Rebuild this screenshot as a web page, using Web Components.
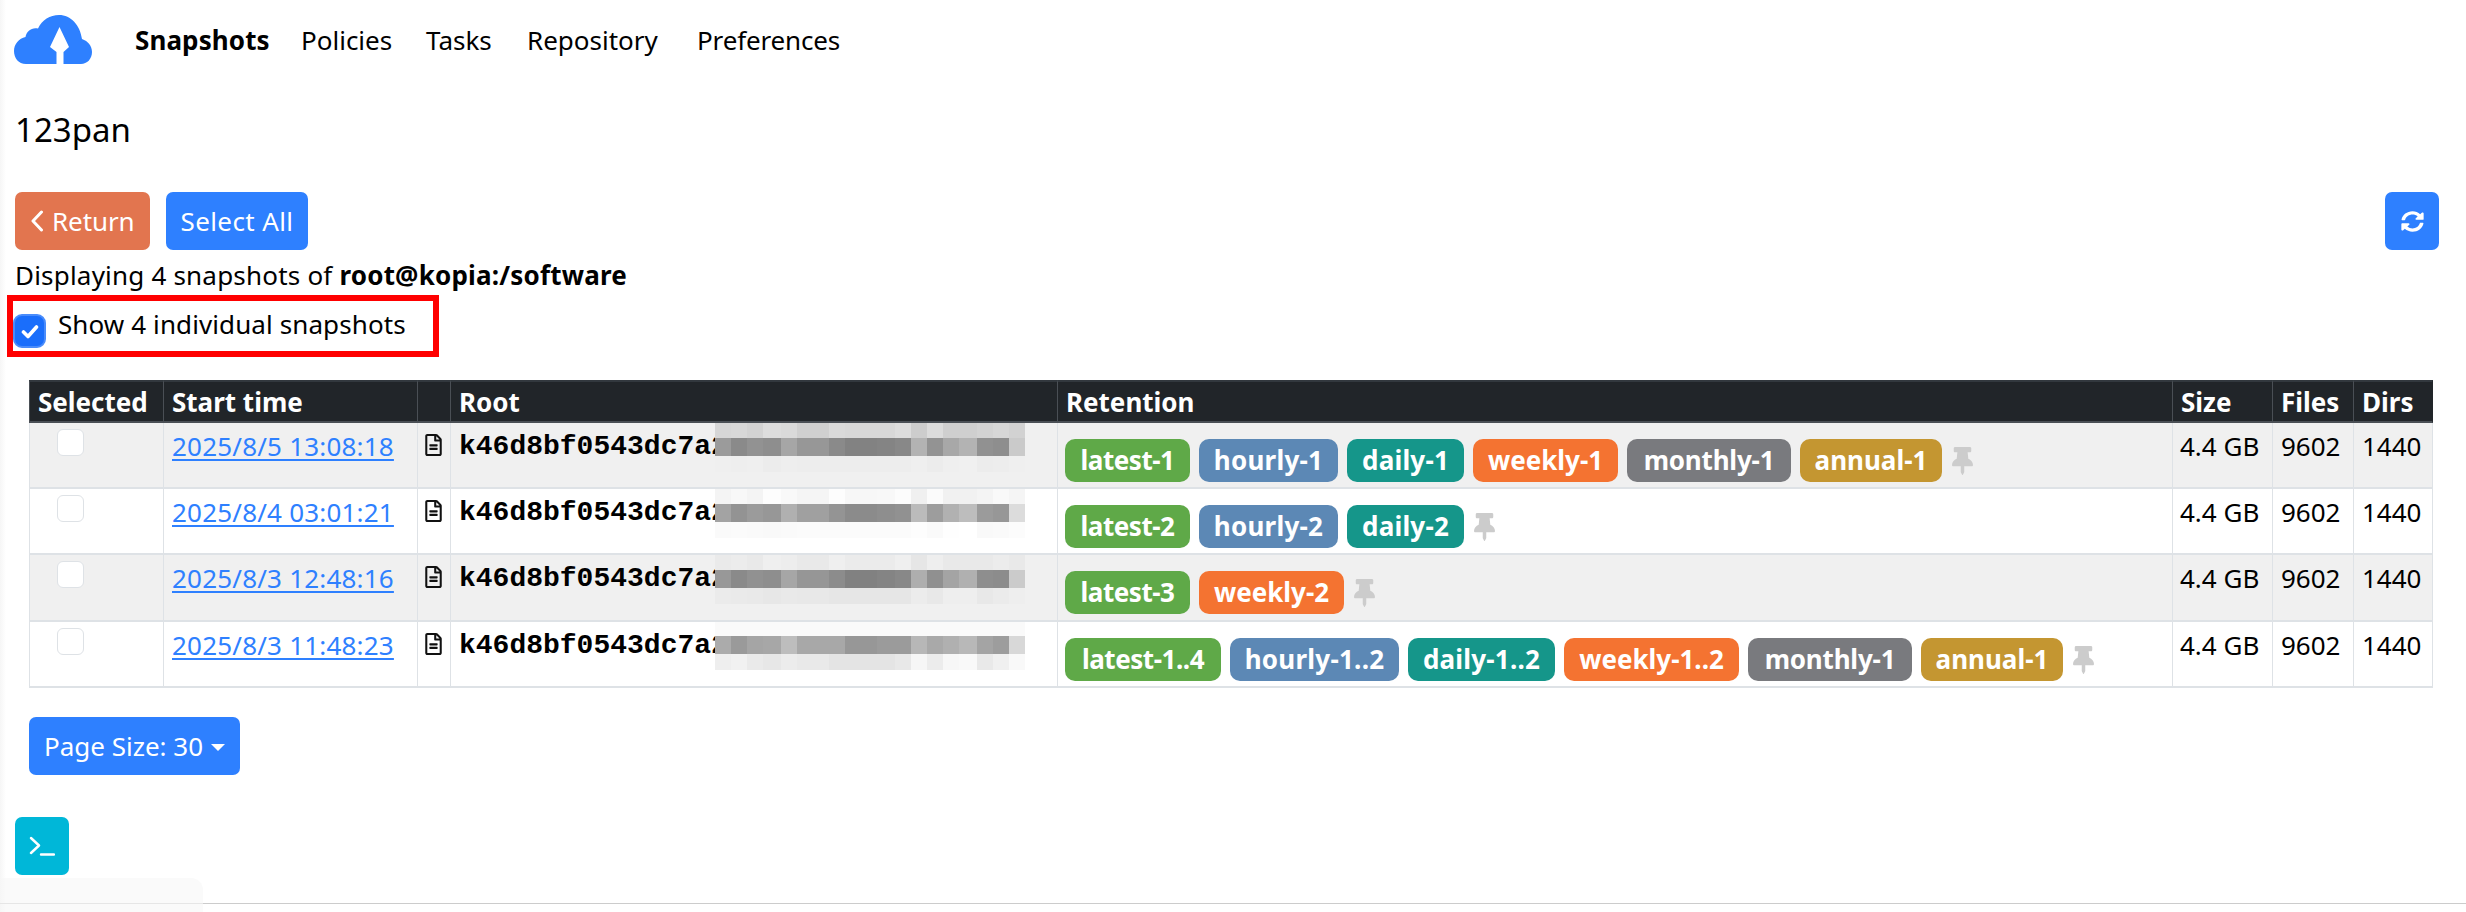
<!doctype html><html lang="en"><head><meta charset="utf-8"><title>Snapshots</title>
<style>
html,body{margin:0;padding:0;background:#fff;height:100%}
body{font-family:"Noto Sans",sans-serif;font-size:26px;color:#000;overflow:hidden}
</style></head><body>
<kopia-app></kopia-app>
<script>
const BASE=':host{font-family:"Noto Sans",sans-serif}';
function def(name,html){
  customElements.define(name,class extends HTMLElement{
    constructor(){super();this.attachShadow({mode:'open'}).innerHTML=typeof html==='function'?html(this):html;}
  });
}
const P={
 sync:'M370.72 133.28C339.458 104.008 298.888 87.962 255.848 88c-77.458.068-144.328 53.178-162.791 126.85-1.344 5.363-6.122 9.15-11.651 9.15H24.103c-7.498 0-13.194-6.807-11.807-14.176C33.933 94.924 134.813 8 256 8c66.448 0 126.791 26.136 171.315 68.685L463.03 40.97C478.149 25.851 504 36.559 504 57.941V192c0 13.255-10.745 24-24 24H345.941c-21.382 0-32.09-25.851-16.971-40.971l41.75-41.749zM32 296h134.059c21.382 0 32.09 25.851 16.971 40.971l-41.75 41.75c31.262 29.273 71.835 45.319 114.876 45.28 77.418-.07 144.315-53.144 162.787-126.849 1.344-5.363 6.122-9.15 11.651-9.15h57.304c7.498 0 13.193 6.807 11.807 14.176C478.067 417.076 377.187 504 256 504c-66.448 0-126.791-26.136-171.315-68.685L48.97 471.03C33.851 486.149 8 475.441 8 454.059V320c0-13.255 10.745-24 24-24z',
 pin:'M298.028 214.267L285.793 96H328c13.255 0 24-10.745 24-24V24c0-13.255-10.745-24-24-24H56C42.745 0 32 10.745 32 24v48c0 13.255 10.745 24 24 24h42.207L85.972 214.267C37.465 236.82 0 277.261 0 328c0 13.255 10.745 24 24 24h136v104.007c0 1.242.289 2.467.845 3.578l24 48c2.941 5.882 11.364 5.893 14.311 0l24-48a8.008 8.008 0 0 0 .845-3.578V352h136c13.255 0 24-10.745 24-24-.001-51.183-37.983-91.42-85.973-113.733z',
 file:'M288 248v28c0 6.6-5.4 12-12 12H108c-6.6 0-12-5.4-12-12v-28c0-6.6 5.4-12 12-12h168c6.6 0 12 5.4 12 12zm-12 72H108c-6.6 0-12 5.4-12 12v28c0 6.6 5.4 12 12 12h168c6.6 0 12-5.4 12-12v-28c0-6.6-5.4-12-12-12zm108-188.1V464c0 26.5-21.5 48-48 48H48c-26.5 0-48-21.5-48-48V48C0 21.5 21.5 0 48 0h204.1C264.8 0 277 5.1 286 14.1L369.9 98c9 8.9 14.1 21.2 14.1 33.9zm-128-80V128h76.1L256 51.9zM336 464V176H232c-13.3 0-24-10.7-24-24V48H48v416h288z'
};

def('k-btn',`<style>${BASE}
:host{display:inline-flex;align-items:center;justify-content:center;box-sizing:border-box;height:58px;padding:0 var(--pad,16px);border-radius:7px;background:var(--bg,#2e80ff);color:#fff;font-size:26px;line-height:36px;white-space:nowrap;gap:var(--gap,0);letter-spacing:var(--ls,0)}
</style><slot></slot>`);

def('k-logo',`<style>:host{display:block;width:78px;height:49px}svg{display:block}</style>
<svg width="78" height="49" viewBox="13 15 78 49"><path fill="#2e80ff" d="M25 64C17.500 64 13 58 13 51C13 44 18 38.500 24.500 37C25.500 31 31 27 37 28.500C41 20 49 15 58 15C70 15 79 25 81 39C87 41 91 46 91 52C91 59 86 64 80 64Z"/><path fill="#fff" d="M58.500 27L68 47L62.500 52L62.500 64L55.500 64L55.500 52L49 47Z"/></svg>`);
def('k-nav-link',`<style>:host{display:block;color:#000;line-height:36px;white-space:nowrap;letter-spacing:var(--ls,0)}:host([active]){font-weight:700;letter-spacing:.1px}</style><slot></slot>`);
def('k-nav',`<style>${BASE}
:host{display:flex;align-items:center;height:49px;padding:15px 0 0 14px}
nav{display:grid;grid-template-columns:166px 125px 101px 170px auto;margin-left:43px;margin-top:1px}
</style><k-logo></k-logo><nav><slot></slot></nav>`);

def('k-badge',`<style>${BASE}
:host{display:inline-block;box-sizing:border-box;height:43px;width:var(--w);text-align:center;border-radius:10px;color:#fff;font-weight:700;font-size:26px;line-height:43px;white-space:nowrap;background:var(--c);letter-spacing:var(--ls,0)}
</style><slot></slot>`);
def('k-pin',`<style>:host{display:block;width:21px;height:28px}svg{display:block}</style><svg width="21" height="28" viewBox="0 0 384 512"><path fill="#ccc" d="${P.pin}"/></svg>`);
def('k-file',`<style>:host{display:block;width:17px;height:22px}svg{display:block}</style><svg width="17" height="22" viewBox="0 0 384 512"><path fill="#111" d="${P.file}"/></svg>`);
def('k-check',`<style>:host{display:block;box-sizing:border-box;width:27px;height:27px;background:#fff;border:1px solid #dee2e6;border-radius:6px}</style>`);

const W=[16,16,16,18,16,16,16,16,16,16,18,16,16,16,16,18,16,16,16];
const MASK=[
 ['d6 d8 d3 dd da d0 d0 da d8 d8 d8 dd cd dc cf cf d3 d7 d2','9b 8a 92 8e a6 97 97 8a 82 82 84 88 b3 93 a8 b3 91 8e ca','ef ee ef ec ee ed ed ed ed ed ed ed ef ec ef f0 ec ed ef'],
 ['f4 f8 f4 fd f9 f5 f5 fd f7 f7 f8 fc f0 fb f1 f1 f4 f9 f5','a3 93 9b 97 b0 a0 a0 94 8b 8b 8e 91 bb 9d b1 bd 9b 97 dc','fa fb fa f9 fa fb fb fb fb fb fb fb fd fa fe ff f9 fa fc'],
 ['ea ec e9 ef ed e9 e9 ef eb eb eb ef e6 ee e9 e9 e9 ec e9','98 8a 91 8e a6 96 96 8c 81 81 84 88 ae 90 a4 b0 8e 8c cb','eb ea e9 e7 e9 e8 e8 e6 e6 e6 e6 e6 ec e8 ee ee e8 eb ee'],
 ['fa fa fa fa fa fa fa fa fa fa fa fa fa fa fa fa fa fa fa','ab 9a a5 a7 bd a8 a8 a8 97 97 9b 9b b7 a9 b0 b8 a4 9d d8','ee f1 ea e7 ec e9 e9 e4 e4 e4 e4 e8 f6 ec f7 f9 e9 f0 f9']
];
customElements.define('k-mask',class extends HTMLElement{
  constructor(){super();
    const m=MASK[+this.getAttribute('row')||0];
    const cells=m.map(b=>b.split(' ').map(g=>`<i style="background:#${g}${g}${g}"></i>`).join('')).join('');
    this.attachShadow({mode:'open'}).innerHTML=`<style>:host{display:grid;grid-template-columns:${W.map(w=>w+'px').join(' ')};grid-template-rows:16px 18px 16px;width:310px;height:50px}i{display:block}</style>${cells}`;
  }
});

const C={latest:'#5fa948',hourly:'#5c88b5',daily:'#15968a',weekly:'#f47331',monthly:'#797a7e',annual:'#c49631'};
const LS={latest:'-.45px',hourly:'.25px',daily:'.2px',weekly:'0',monthly:'-.2px',annual:'0'};
const BW={latest:125,hourly:139,daily:117,weekly:145,monthly:164,annual:142};
const BW2={latest:156,hourly:169,daily:147,weekly:175};
const ROWS=[
 ['2025/8/5 13:08:18',['latest-1','hourly-1','daily-1','weekly-1','monthly-1','annual-1']],
 ['2025/8/4 03:01:21',['latest-2','hourly-2','daily-2']],
 ['2025/8/3 12:48:16',['latest-3','weekly-2']],
 ['2025/8/3 11:48:23',['latest-1..4','hourly-1..2','daily-1..2','weekly-1..2','monthly-1','annual-1']]
];
const HT=[66,66,67,66];
def('k-table',()=>`<style>${BASE}
:host{display:block;margin:0 0 0 29px;width:2404px}
table{border-collapse:separate;border-spacing:0;table-layout:fixed;width:2404px;font-size:26px;line-height:36px}
th{height:43px;box-sizing:border-box;background:#212529;color:#fff;font-weight:700;text-align:left;padding:0 8px;border-top:2px solid #32383e;border-bottom:2px solid #4a4f55;border-left:1px solid #4a4f55;white-space:nowrap;line-height:38px}
td{box-sizing:border-box;padding:5px 8px 0;vertical-align:top;border-bottom:2px solid #dee2e6;border-left:1px solid #dee2e6;white-space:nowrap}
td:last-child,th:last-child{border-right:1px solid #dee2e6}
th:last-child{border-right-color:#212529}
tr.odd td{background:#f0f0f0}
a{color:#2e80ff;text-decoration:underline;text-underline-offset:3px;letter-spacing:.2px}
.sel k-check{margin:1px 0 0 19px}
.ico{padding:11px 0 0 7px}
.root{position:relative;font-family:"Liberation Mono",monospace;font-weight:700;font-size:28px;overflow:hidden;padding-top:6px}
.root k-mask{position:absolute;left:264px;top:-1px}
.ret{padding:16px 0 0 7px}
.ret div{display:flex;align-items:center;gap:9px}
.ret k-pin{margin:0 0 0 1px}
.sz{padding-left:7px}
</style>
<table><colgroup><col style="width:134px"><col style="width:254px"><col style="width:33px"><col style="width:607px"><col style="width:1115px"><col style="width:100px"><col style="width:81px"><col style="width:80px"></colgroup>
<thead><tr><th>Selected</th><th>Start time</th><th></th><th>Root</th><th>Retention</th><th>Size</th><th>Files</th><th>Dirs</th></tr></thead>
<tbody>${ROWS.map((r,i)=>`<tr class="${i%2?'':'odd'}" style="height:${HT[i]}px">
<td class="sel"><k-check></k-check></td><td><a>${r[0]}</a></td><td class="ico"><k-file></k-file></td>
<td class="root">k46d8bf0543dc7a2<k-mask row="${i}"${i==3?' style="top:-2px"':''}></k-mask></td>
<td class="ret"><div>${r[1].map(t=>{const k=t.split('-')[0];const w=t.includes('..')?BW2[k]:BW[k];return `<k-badge style="--c:${C[k]};--ls:${LS[k]};--w:${w}px">${t}</k-badge>`}).join('')}<k-pin></k-pin></div></td>
<td class="sz">4.4 GB</td><td>9602</td><td>1440</td></tr>`).join('')}</tbody></table>`);

def('k-toolbar',`<style>${BASE}
:host{display:flex;justify-content:space-between;padding:0 27px 0 15px}
.l{display:flex;gap:16px}
</style><div class="l"><slot name="left"></slot></div><slot name="right"></slot>`);

def('k-show-toggle',`<style>${BASE}
:host{display:flex;position:relative;align-items:flex-start;height:62px;box-sizing:border-box;padding:19px 0 0 13px;white-space:nowrap;letter-spacing:.1px}
.box{width:33px;height:34px;box-sizing:border-box;border-radius:9px;background:#1a6efb;border:2px solid #4a8cfb;display:flex;align-items:center;justify-content:center}
span{margin:-8px 0 0 12px;line-height:36px}
.mark{position:absolute;left:7px;top:0;width:432px;height:62px;box-sizing:border-box;border:6px solid #f00;pointer-events:none}
svg{display:block}
</style><div class="box"><svg width="18" height="15" viewBox="0 0 18 15"><path d="M2.500 8L7 12.500L15.500 3" fill="none" stroke="#fff" stroke-width="3.600" stroke-linecap="round" stroke-linejoin="round"/></svg></div><span><slot></slot></span><div class="mark"></div>`);

def('k-footer',`<style>
:host{display:block;position:relative;height:34px}
.line{border-top:1px solid #ccc;position:relative;top:25px}
.fade{position:absolute;left:0;top:0;width:203px;height:34px;background:rgba(247,247,247,.6);border-top-right-radius:12px}
</style><div class="line"></div><div class="fade"></div>`);

def('kopia-app',`<style>${BASE}
:host{display:block;width:2466px;height:912px;overflow:hidden;background:linear-gradient(to right,#f6f6f6,#fff 6px)}
h1{font-weight:400;font-size:33px;line-height:44px;margin:0;padding:44px 0 0 15px}
.info{padding:7px 0 0 15px;line-height:36px;height:36px;white-space:nowrap;margin-bottom:2px;letter-spacing:.2px}
.pg{margin:29px 0 0 29px}
.term{margin:42px 0 0 15px}
k-table{margin-top:23px}
k-toolbar{margin-top:40px}
.tail{margin-top:3px}
svg{display:block}
b{font-weight:700}
.caret{width:0;height:0;border-left:7px solid transparent;border-right:7px solid transparent;border-top:7px solid #fff;margin-left:8px;margin-top:2px}
</style>
<k-nav><k-nav-link active>Snapshots</k-nav-link><k-nav-link>Policies</k-nav-link><k-nav-link>Tasks</k-nav-link><k-nav-link>Repository</k-nav-link><k-nav-link style="--ls:-.15px">Preferences</k-nav-link></k-nav>
<h1>123pan</h1>
<k-toolbar>
 <k-btn slot="left" style="--bg:#e2754f;--gap:8px;--pad:15px;--ls:-.1px"><svg width="14" height="22" viewBox="0 0 14 22"><path d="M11.500 2L3 11L11.500 20" fill="none" stroke="#fff" stroke-width="3" stroke-linecap="round" stroke-linejoin="round"/></svg>Return</k-btn>
 <k-btn slot="left" style="--pad:15px;--ls:.4px">Select All</k-btn>
 <k-btn slot="right" style="--pad:0;width:54px"><svg width="23" height="21" viewBox="0 0 512 512" preserveAspectRatio="none"><path fill="#fff" d="${P.sync}"/></svg></k-btn>
</k-toolbar>
<div class="info">Displaying 4 snapshots of <b>root@kopia:/software</b></div>
<k-show-toggle>Show 4 individual snapshots</k-show-toggle>
<k-table></k-table>
<div class="pg"><k-btn style="--pad:15px">Page Size: 30<span class="caret"></span></k-btn></div>
<div class="term"><k-btn style="--bg:#00b7d8;--pad:0;width:54px"><svg width="26" height="20" viewBox="0 0 26 20"><path d="M2 2L10 9.500L2 17M12 18.500H25" fill="none" stroke="#fff" stroke-width="2.400" stroke-linecap="round" stroke-linejoin="round"/></svg></k-btn></div>
<k-footer class="tail"></k-footer>`);
</script></body></html>
